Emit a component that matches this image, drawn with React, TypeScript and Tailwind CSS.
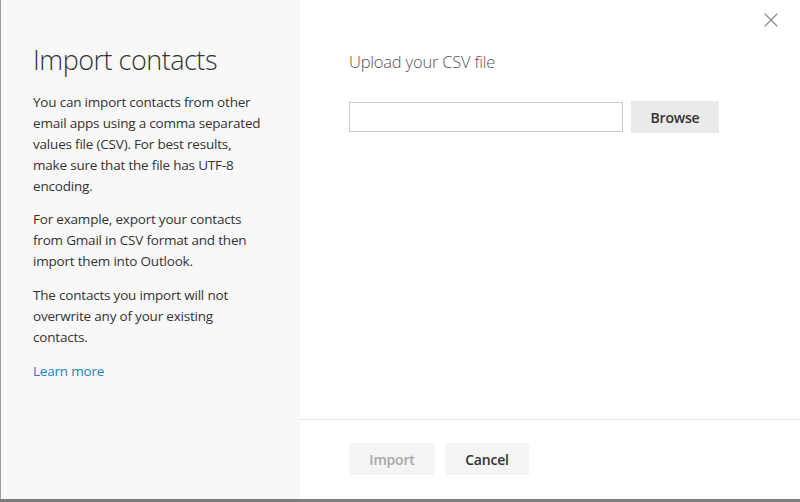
import { X } from "lucide-react";

const font = { fontFamily: '"Open Sans", "Noto Sans", sans-serif' };

export default function App() {
  return (
    <div className="w-[800px] h-[502px] flex flex-col bg-white overflow-hidden" style={font}>
      <div className="flex-1 flex min-h-0">
        {/* left info panel */}
        <div className="w-[300px] bg-[#f8f8f8] border-l border-[#9c9c9c] pl-[32px] pr-3 pt-[42px] text-[#333] text-[13.5px] leading-[21px] tracking-[-0.2px]">
          <h1 className="text-[27px] font-light leading-[36px] text-[#333] tracking-[-0.5px]">Import contacts</h1>
          <p className="mt-[14px]">
            You can import contacts from other
            <br />
            email apps using a comma separated
            <br />
            values file (CSV). For best results,
            <br />
            make sure that the file has UTF-8
            <br />
            encoding.
          </p>
          <p className="mt-[12px]">
            For example, export your contacts
            <br />
            from Gmail in CSV format and then
            <br />
            import them into Outlook.
          </p>
          <p className="mt-[13px]">
            The contacts you import will not
            <br />
            overwrite any of your existing
            <br />
            contacts.
          </p>
          <a className="block mt-[13px] text-[#1a7fc6]">Learn more</a>
        </div>

        {/* right panel */}
        <div className="flex-1 flex flex-col">
          <div className="flex-1 relative pl-[49px] pt-[50px]">
            <button className="absolute right-[17px] top-[8px] text-[#8a8a8a]">
              <X className="w-[24px] h-[24px]" strokeWidth={1.2} />
            </button>
            <h2 className="text-[16.5px] font-light text-[#555] leading-[24px] tracking-[-0.2px]">Upload your CSV file</h2>
            <div className="mt-[27px] flex items-center gap-[8px]">
              <div className="w-[274px] h-[30px] border border-[#c8c8c8] bg-white" />
              <button className="w-[88px] h-[32px] bg-[#eaeaea] text-[14px] font-semibold text-[#333] tracking-[-0.2px]">
                Browse
              </button>
            </div>
          </div>
          <div className="h-[80px] border-t border-[#e6e6e6] pl-[49px] pt-[23px] flex gap-[10px]">
            <button className="w-[86px] h-[32px] bg-[#f4f4f4] text-[14px] font-semibold text-[#a8a8a8] tracking-[-0.2px]">
              Import
            </button>
            <button className="w-[84px] h-[32px] bg-[#f4f4f4] text-[14px] font-semibold text-[#333] tracking-[-0.2px]">
              Cancel
            </button>
          </div>
        </div>
      </div>
      <div className="h-[3px] bg-[#7d7d7d]" />
    </div>
  );
}
